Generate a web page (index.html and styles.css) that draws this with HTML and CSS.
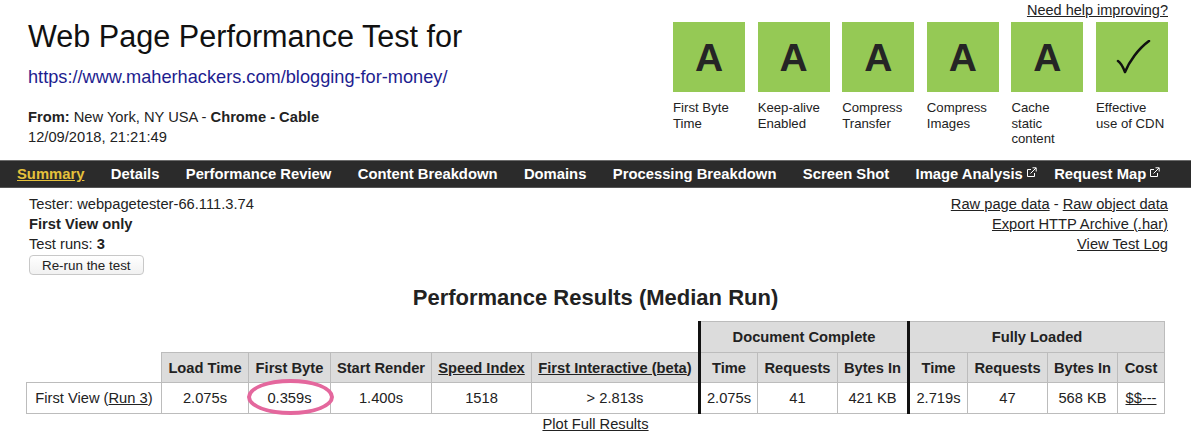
FILE: index.html
```html
<!DOCTYPE html>
<html lang="en">
<head>
<meta charset="utf-8">
<title>WebPagetest Test Result</title>
<link rel="stylesheet" href="styles.css">
</head>
<body>
<header class="top">
  <div class="test-info">
    <h1 class="title">Web Page Performance Test for</h1>
    <a class="url" href="#">https://www.maherhackers.com/blogging-for-money/</a>
    <div class="from"><b>From:</b> New York, NY USA - <b>Chrome - Cable</b></div>
    <div class="date">12/09/2018, 21:21:49</div>
  </div>
  <div class="grades">
    <a class="help" href="#">Need help improving?</a>
    <ul class="grade-list">
      <li class="grade"><div class="grade-box">A</div><span class="grade-label">First Byte Time</span></li>
      <li class="grade"><div class="grade-box">A</div><span class="grade-label">Keep-alive Enabled</span></li>
      <li class="grade"><div class="grade-box">A</div><span class="grade-label">Compress Transfer</span></li>
      <li class="grade"><div class="grade-box">A</div><span class="grade-label">Compress Images</span></li>
      <li class="grade"><div class="grade-box">A</div><span class="grade-label">Cache static content</span></li>
      <li class="grade"><div class="grade-box"><svg class="check" width="40" height="36" viewBox="0 0 40 36"><path d="M4 21 C7 23 9 27 11 32 C15 22 24 9 35 1" fill="none" stroke="#111" stroke-width="2.6" stroke-linecap="round" stroke-linejoin="round"/></svg></div><span class="grade-label">Effective use of CDN</span></li>
    </ul>
  </div>
</header>

<nav class="tabs">
  <a class="tab active" href="#">Summary</a>
  <a class="tab" href="#">Details</a>
  <a class="tab" href="#">Performance Review</a>
  <a class="tab" href="#">Content Breakdown</a>
  <a class="tab" href="#">Domains</a>
  <a class="tab" href="#">Processing Breakdown</a>
  <a class="tab" href="#">Screen Shot</a>
  <a class="tab external" href="#">Image Analysis<svg class="ext" width="11" height="11" viewBox="0 0 11 11"><path d="M5 2.5H1.5V9.5H8.5V6" fill="none" stroke="#fff" stroke-width="1"/><path d="M4.5 6.5L10 1M6.5 0.8H10.2V4.5" fill="none" stroke="#fff" stroke-width="1"/></svg></a>
  <a class="tab external" href="#">Request Map<svg class="ext" width="11" height="11" viewBox="0 0 11 11"><path d="M5 2.5H1.5V9.5H8.5V6" fill="none" stroke="#fff" stroke-width="1"/><path d="M4.5 6.5L10 1M6.5 0.8H10.2V4.5" fill="none" stroke="#fff" stroke-width="1"/></svg></a>
</nav>

<section class="meta">
  <div class="meta-left">
    <div>Tester: webpagetester-66.111.3.74</div>
    <div><b>First View only</b></div>
    <div>Test runs: <b>3</b></div>
    <button class="rerun" type="button">Re-run the test</button>
  </div>
  <div class="meta-right">
    <div><a href="#">Raw page data</a> - <a href="#">Raw object data</a></div>
    <div><a href="#">Export HTTP Archive (.har)</a></div>
    <div><a href="#">View Test Log</a></div>
  </div>
</section>

<h2 class="results-title">Performance Results (Median Run)</h2>

<div class="results">
  <div class="table-wrap">
    <table class="perf">
      <colgroup>
        <col style="width:135px"><col style="width:87px"><col style="width:82px"><col style="width:101px"><col style="width:100px"><col style="width:168px">
        <col style="width:58px"><col style="width:80px"><col style="width:71px">
        <col style="width:59px"><col style="width:80px"><col style="width:70px"><col style="width:47px">
      </colgroup>
      <tr class="row-group">
        <td class="blank" colspan="6"></td>
        <th class="sep" colspan="3">Document Complete</th>
        <th class="sep" colspan="4">Fully Loaded</th>
      </tr>
      <tr class="row-head">
        <td class="blank"></td>
        <th>Load Time</th>
        <th>First Byte</th>
        <th>Start Render</th>
        <th><a href="#">Speed Index</a></th>
        <th><a href="#">First Interactive (beta</a>)</th>
        <th class="sep">Time</th>
        <th>Requests</th>
        <th>Bytes In</th>
        <th class="sep">Time</th>
        <th>Requests</th>
        <th>Bytes In</th>
        <th>Cost</th>
      </tr>
      <tr class="row-data">
        <td>First View (<a href="#">Run 3</a>)</td>
        <td>2.075s</td>
        <td>0.359s</td>
        <td>1.400s</td>
        <td>1518</td>
        <td>&gt; 2.813s</td>
        <td class="sep">2.075s</td>
        <td>41</td>
        <td>421 KB</td>
        <td class="sep">2.719s</td>
        <td>47</td>
        <td>568 KB</td>
        <td><a href="#">$$---</a></td>
      </tr>
    </table>
    <div class="highlight"></div>
  </div>
  <a class="plot" href="#">Plot Full Results</a>
</div>
</body>
</html>
```

FILE: styles.css
```css
* { box-sizing: border-box; }

body {
  margin: 0;
  font-family: "Liberation Sans", Arial, sans-serif;
  font-size: 14.7px;
  color: #222;
  background: #fff;
}

a { color: #222; }

.top {
  display: flex;
  justify-content: space-between;
  align-items: flex-start;
}

.test-info {
  padding: 19px 0 0 28px;
}

.title {
  margin: 0;
  font-size: 30.6px;
  line-height: 34px;
  font-weight: normal;
  color: #111;
}

.url {
  display: block;
  margin-top: 14px;
  font-size: 18.2px;
  line-height: 20px;
  color: #1d1d8f;
  text-decoration: none;
}

.from {
  margin-top: 20px;
  line-height: 20px;
}

.date {
  line-height: 20px;
}

.grades {
  padding: 2px 23px 0 0;
  display: flex;
  flex-direction: column;
  align-items: flex-end;
}

.help {
  font-size: 14.5px;
  line-height: 16px;
}

.grade-list {
  list-style: none;
  margin: 4px 0 0 0;
  padding: 0;
  display: flex;
  gap: 12.6px;
}

.grade {
  width: 72px;
}

.grade-box {
  width: 72px;
  height: 70px;
  background: #95c955;
  display: flex;
  align-items: center;
  justify-content: center;
  font-size: 39px;
  font-weight: bold;
  color: #252525;
  padding-top: 2px;
}

.check {
  display: block;
  margin-left: 3px;
}

.grade-label {
  display: block;
  width: 70px;
  margin-top: 8px;
  font-size: 13.2px;
  line-height: 15.5px;
  color: #222;
}

.tabs {
  margin-top: 13px;
  height: 28px;
  background: #2b2b2b;
  border-top: 1px solid #6c6c6c;
  border-bottom: 1px solid #555;
  display: flex;
  align-items: center;
  gap: 26.4px;
  padding-left: 17px;
}

.tab {
  color: #fff;
  font-weight: bold;
  font-size: 14.8px;
  text-decoration: none;
  display: flex;
  align-items: center;
}

.tab.external + .tab.external {
  margin-left: -9px;
}

.tab.active {
  color: #e5c13b;
  text-decoration: underline;
}

.ext {
  margin-left: 3px;
  margin-top: -3px;
}

.meta {
  margin-top: 6px;
  padding: 0 23px 0 29px;
  display: flex;
  justify-content: space-between;
  line-height: 20px;
}

.meta-right {
  text-align: right;
}

.rerun {
  margin-top: 1px;
  height: 20px;
  padding: 0 12px;
  font-family: "Liberation Sans", Arial, sans-serif;
  font-size: 13.4px;
  color: #222;
  background: linear-gradient(#fff, #f1f1f1);
  border: 1px solid #c8c8c8;
  border-radius: 4px;
  display: block;
}

.results-title {
  margin: 10px 0 10px 0;
  text-align: center;
  font-size: 22px;
  line-height: 26px;
  font-weight: bold;
  color: #222;
}

.results {
  display: flex;
  flex-direction: column;
  align-items: center;
}

.table-wrap {
  position: relative;
}

.perf {
  table-layout: fixed;
  width: 1138px;
  border-collapse: collapse;
}

.perf th,
.perf td {
  border: 1px solid #bcbcbc;
  text-align: center;
  padding: 0 3px;
  white-space: nowrap;
  font-size: 14.7px;
}

.perf th {
  background: #dcdcdc;
  font-weight: bold;
  color: #222;
}

.row-group { height: 31px; }
.row-head { height: 30px; }
.row-data { height: 31px; }

.perf .blank {
  border: none;
  background: transparent;
}

.perf .sep {
  border-left: 3px solid #111;
}

.highlight {
  position: absolute;
  left: 221px;
  top: 58px;
  width: 87px;
  height: 36px;
  border: 4px solid #e4679d;
  border-radius: 50%;
  pointer-events: none;
}

.plot {
  margin-top: 1px;
  line-height: 18px;
}
```
